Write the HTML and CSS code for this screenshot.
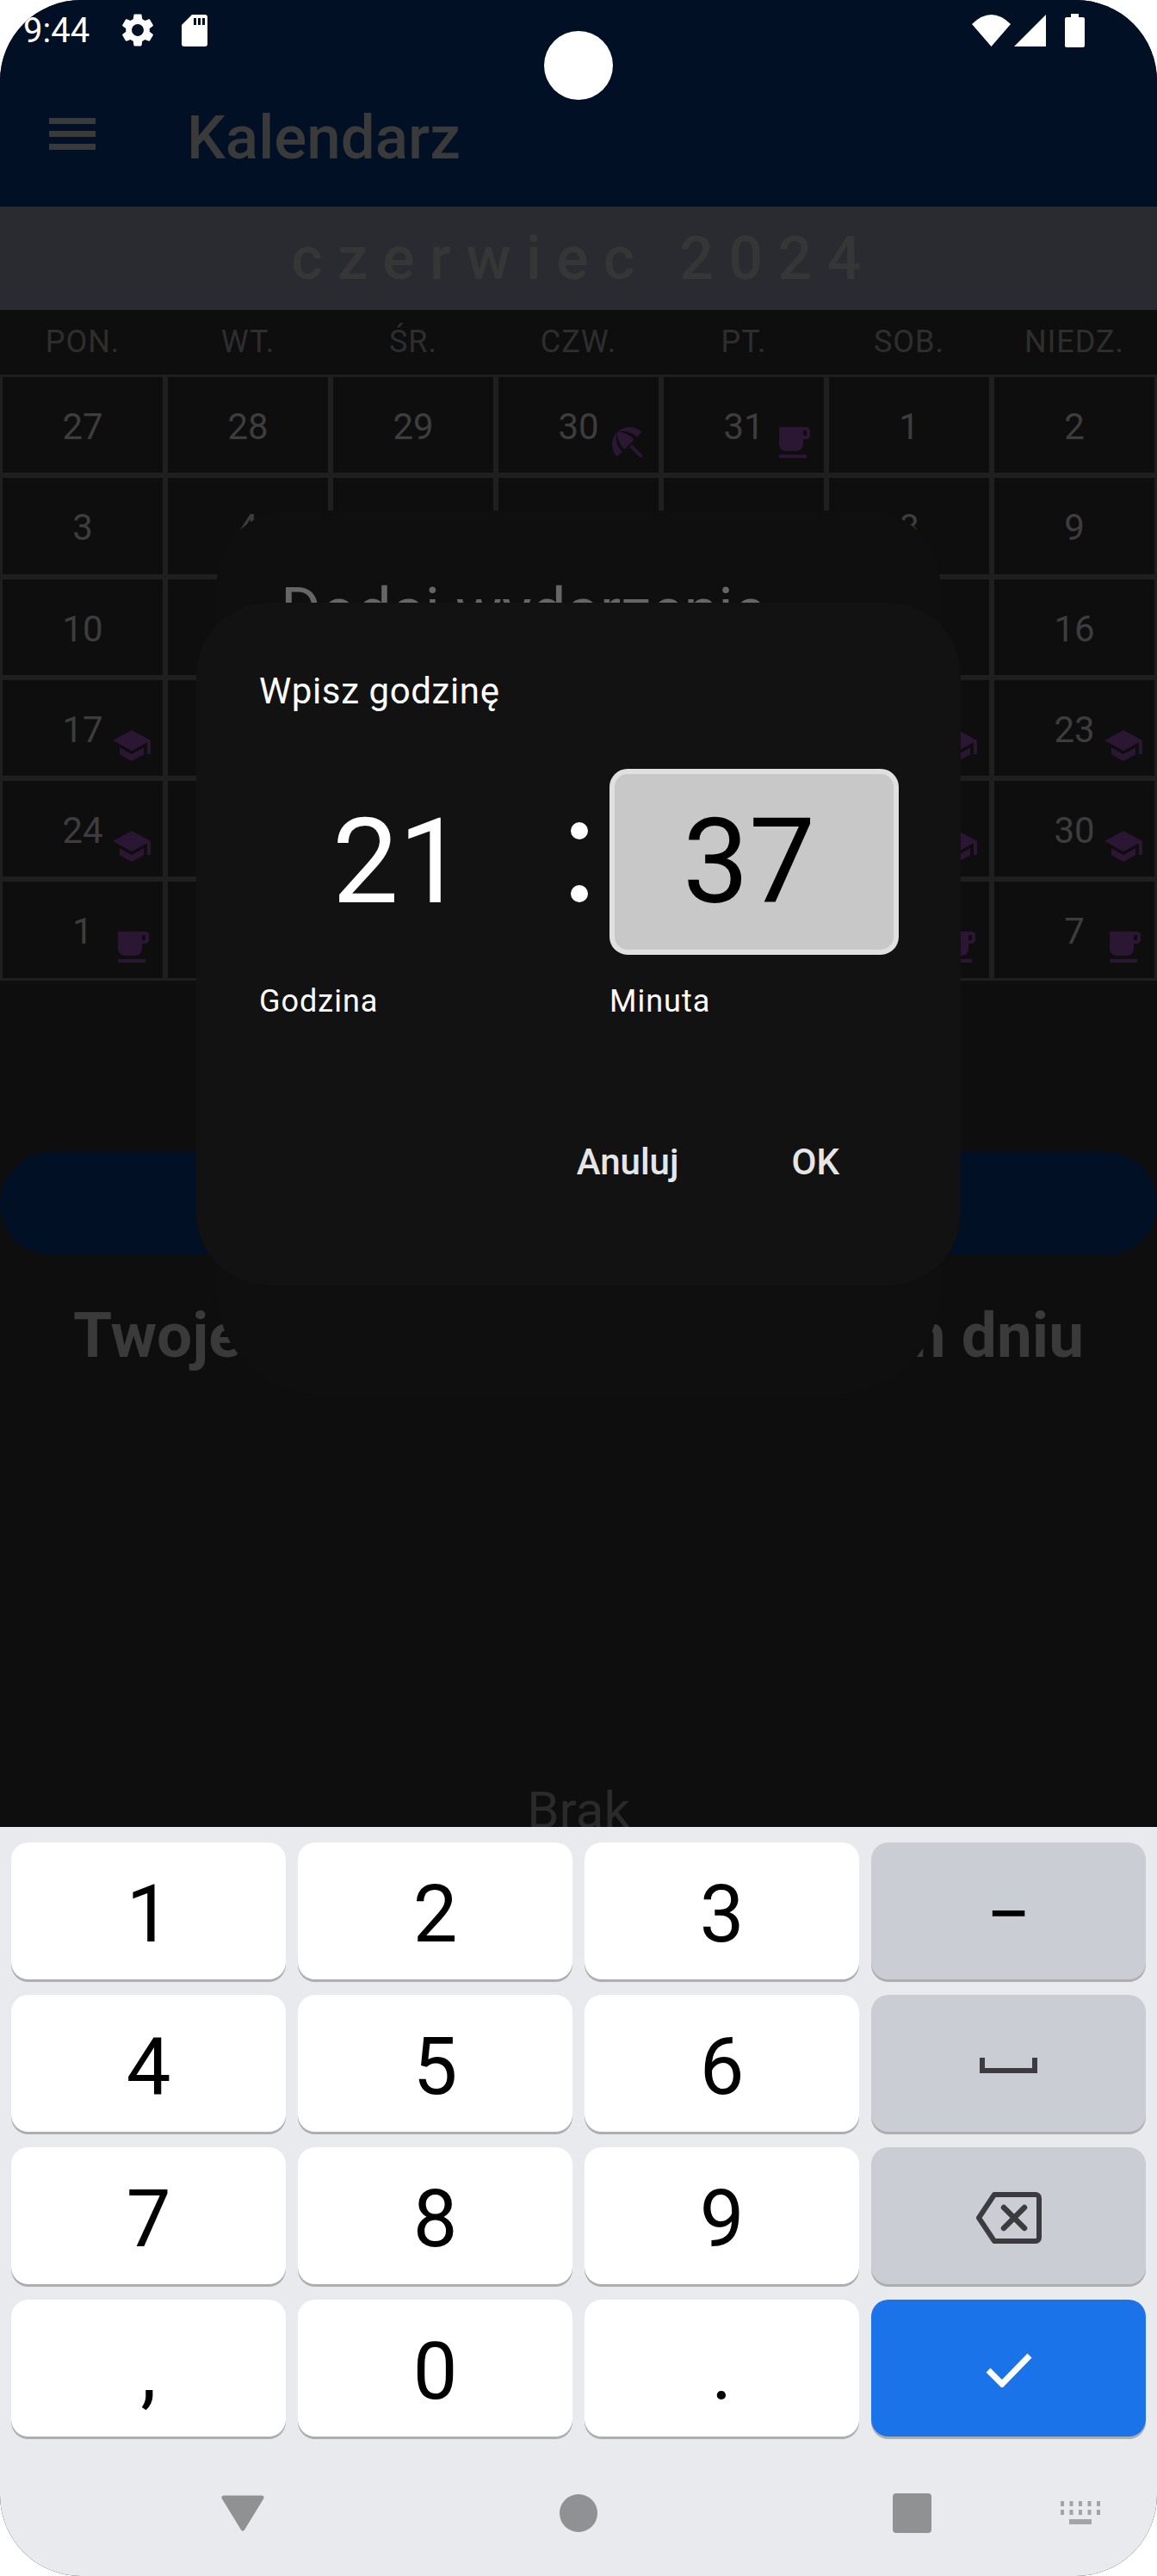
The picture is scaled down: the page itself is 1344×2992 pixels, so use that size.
FILE: index.html
```html
<!DOCTYPE html>
<html lang="pl">
<head>
  <meta charset="UTF-8" />
  <meta name="viewport" content="width=device-width, initial-scale=1.0" />
  <title>Kalendarz</title>
  <link rel="stylesheet" href="styles.css">
</head>
<body>
  <svg class="defs" width="0" height="0">
    <symbol id="school" viewBox="0 0 24 24"><path d="M5 13.18v4L12 21l7-3.82v-4L12 17l-7-3.82zM12 3L1 9l11 6 9-4.91V17h2V9L12 3z"/></symbol>
    <symbol id="coffee" viewBox="0 0 24 24"><path d="M20 3H4v10c0 2.21 1.79 4 4 4h6c2.21 0 4-1.79 4-4v-3h2c1.11 0 2-.89 2-2V5c0-1.11-.89-2-2-2zm0 5h-2V5h2v3zM4 19h16v2H4z"/></symbol>
    <symbol id="beach" viewBox="0 0 24 24"><path d="M13.127 14.56l1.43-1.43 6.44 6.443L19.57 21zm4.293-5.73l2.86-2.86c-3.95-3.95-10.35-3.96-14.3-.02 3.93-1.3 8.31-.25 11.44 2.88zM5.95 5.98c-3.94 3.95-3.93 10.35.02 14.3l2.86-2.86C5.7 14.29 4.65 9.91 5.95 5.98zm.02-.02l-.01.01c-.38 3.01 1.17 6.88 4.3 10.02l5.73-5.73c-3.13-3.13-7.01-4.68-10.02-4.3z"/></symbol>
  </svg>

  <div class="screen">
    <header class="appbar">
      <div class="statusbar">
        <span class="clock">9:44</span>
        <svg class="ic-gear" viewBox="0 0 24 24"><path d="M19.14 12.94c.04-.3.06-.61.06-.94 0-.32-.02-.64-.07-.94l2.03-1.58c.18-.14.23-.41.12-.61l-1.92-3.32c-.12-.22-.37-.29-.59-.22l-2.39.96c-.5-.38-1.03-.7-1.62-.94l-.36-2.54c-.04-.24-.24-.41-.48-.41h-3.84c-.24 0-.43.17-.47.41l-.36 2.54c-.59.24-1.13.57-1.62.94l-2.39-.96c-.22-.08-.47 0-.59.22L2.74 8.87c-.12.21-.08.47.12.61l2.03 1.58c-.05.3-.09.63-.09.94s.02.64.07.94l-2.03 1.58c-.18.14-.23.41-.12.61l1.92 3.32c.12.22.37.29.59.22l2.39-.96c.5.38 1.03.7 1.62.94l.36 2.54c.05.24.24.41.48.41h3.84c.24 0 .44-.17.47-.41l.36-2.54c.59-.24 1.13-.56 1.62-.94l2.39.96c.22.08.47 0 .59-.22l1.92-3.32c.12-.22.07-.47-.12-.61l-2.01-1.58zM12 15.6c-1.98 0-3.6-1.62-3.6-3.6s1.62-3.6 3.6-3.6 3.6 1.62 3.6 3.6-1.62 3.6-3.6 3.6z"/></svg>
        <svg class="ic-sd" viewBox="0 0 30 37"><path fill-rule="evenodd" d="M12 0h15a3 3 0 0 1 3 3v31a3 3 0 0 1-3 3H3a3 3 0 0 1-3-3V12zM14 4v8h3V4zM19 4v8h3V4zM24 4v8h3V4z"/></svg>
        <span class="status-right">
          <svg class="ic-wifi" viewBox="0 0 45 37"><path d="M0 11Q22.500-11 45 11L22.500 37z"/></svg>
          <svg class="ic-signal" viewBox="0 0 37 37"><path d="M37 0v37H0z"/></svg>
          <svg class="ic-battery" viewBox="0 0 23 39"><path d="M7 0h9v4h5a2 2 0 0 1 2 2v31a2 2 0 0 1-2 2H2a2 2 0 0 1-2-2V6a2 2 0 0 1 2-2h5z"/></svg>
        </span>
      </div>
      <div class="toolbar">
        <div class="menu"><i></i><i></i><i></i></div>
        <h1>Kalendarz</h1>
      </div>
    </header>

    <div class="month">czerwiec 2024</div>

    <div class="weekdays">
      <span>PON.</span><span>WT.</span><span>ŚR.</span><span>CZW.</span><span>PT.</span><span>SOB.</span><span>NIEDZ.</span>
    </div>

    <!-- cells under the dialogs have no number, only what shows past the edges -->
    <div class="grid">
      <div class="day">27</div>
      <div class="day">28</div>
      <div class="day">29</div>
      <div class="day">30<svg class="ev"><use href="#beach"/></svg></div>
      <div class="day">31<svg class="ev"><use href="#coffee"/></svg></div>
      <div class="day">1</div>
      <div class="day">2</div>

      <div class="day">3</div>
      <div class="day">4</div>
      <div class="day"></div>
      <div class="day"></div>
      <div class="day"></div>
      <div class="day">8</div>
      <div class="day">9</div>

      <div class="day">10</div>
      <div class="day"></div>
      <div class="day"></div>
      <div class="day"></div>
      <div class="day"></div>
      <div class="day"></div>
      <div class="day">16</div>

      <div class="day">17<svg class="ev"><use href="#school"/></svg></div>
      <div class="day"></div>
      <div class="day"></div>
      <div class="day"></div>
      <div class="day"></div>
      <div class="day"><svg class="ev"><use href="#school"/></svg></div>
      <div class="day">23<svg class="ev"><use href="#school"/></svg></div>

      <div class="day">24<svg class="ev"><use href="#school"/></svg></div>
      <div class="day"></div>
      <div class="day"></div>
      <div class="day"></div>
      <div class="day"></div>
      <div class="day"><svg class="ev"><use href="#school"/></svg></div>
      <div class="day">30<svg class="ev"><use href="#school"/></svg></div>

      <div class="day">1<svg class="ev"><use href="#coffee"/></svg></div>
      <div class="day"></div>
      <div class="day"></div>
      <div class="day"></div>
      <div class="day"></div>
      <div class="day"><svg class="ev"><use href="#coffee"/></svg></div>
      <div class="day">7<svg class="ev"><use href="#coffee"/></svg></div>
    </div>

    <div class="add-pill"></div>
    <h2>Twoje wydarzenia w wybranym dniu</h2>
    <p class="empty">Brak</p>

    <div class="camera"></div>

    <div class="dialog-back">
      <div class="dialog-back-title">Dodaj wydarzenie</div>
    </div>

    <div class="dialog">
      <div class="dialog-title">Wpisz godzinę</div>
      <div class="time-row">
        <div class="time-box">21</div>
        <div class="colon"><i></i><i></i></div>
        <div class="time-box selected">37</div>
      </div>
      <div class="label-row">
        <span>Godzina</span>
        <span>Minuta</span>
      </div>
      <div class="actions">
        <span>Anuluj</span>
        <span>OK</span>
      </div>
    </div>

    <div class="keyboard">
      <div class="keys">
        <div class="key">1</div>
        <div class="key">2</div>
        <div class="key">3</div>
        <div class="key fn dash">−</div>
        <div class="key">4</div>
        <div class="key">5</div>
        <div class="key">6</div>
        <div class="key fn">
          <svg class="ic-space" viewBox="0 0 67 18"><path d="M3 0v15h61V0" fill="none" stroke="#3c3c40" stroke-width="6"/></svg>
        </div>
        <div class="key">7</div>
        <div class="key">8</div>
        <div class="key">9</div>
        <div class="key fn">
          <svg class="ic-back" viewBox="0 0 76 60"><path d="M21 3h48a4 4 0 0 1 4 4v46a4 4 0 0 1-4 4H21L3 30z" fill="none" stroke="#3c3c40" stroke-width="6" stroke-linejoin="round"/><path d="M32 18l24 24M56 18L32 42" fill="none" stroke="#3c3c40" stroke-width="6.500" stroke-linecap="round"/></svg>
        </div>
        <div class="key">,</div>
        <div class="key">0</div>
        <div class="key">.</div>
        <div class="key done">
          <svg class="ic-check" viewBox="0 0 54 42"><path d="M3 22l16 16L51 5" fill="none" stroke="#fff" stroke-width="7"/></svg>
        </div>
      </div>
      <div class="navbar">
        <svg class="nav-back" viewBox="0 0 50 42"><path d="M3 3h44L25 39z" fill="#8f9193" stroke="#8f9193" stroke-width="5" stroke-linejoin="round"/></svg>
        <div class="nav-home"></div>
        <div class="nav-recent"></div>
        <svg class="nav-kbd" viewBox="0 0 46 28" fill="#a2a4a7">
          <rect x="0" y="0" width="4" height="6"/><rect x="10.500" y="0" width="4" height="6"/><rect x="21" y="0" width="4" height="6"/><rect x="31.500" y="0" width="4" height="6"/><rect x="42" y="0" width="4" height="6"/>
          <rect x="0" y="10" width="4" height="6"/><rect x="10.500" y="10" width="4" height="6"/><rect x="21" y="10" width="4" height="6"/><rect x="31.500" y="10" width="4" height="6"/><rect x="42" y="10" width="4" height="6"/>
          <rect x="10" y="21" width="26" height="6"/>
        </svg>
      </div>
    </div>
  </div>
</body>
</html>
```

FILE: styles.css
```css
* {
  box-sizing: border-box;
}
html, body {
  margin: 0;
  background: #fff;
}
body {
  font-family: Roboto, "Liberation Sans", sans-serif;
}
.defs {
  position: absolute;
}
.screen {
  position: relative;
  width: 1344px;
  height: 2992px;
  overflow: hidden;
  border-radius: 94px;
  background: #0e0e0e;
}

/* top bar */
.appbar {
  height: 240px;
  background: #011025;
}
.statusbar {
  display: flex;
  align-items: center;
  height: 70px;
  padding: 0 84px 0 27px;
  fill: #fff;
  color: #fff;
}
.clock {
  font-size: 40px;
  width: 110px;
}
.ic-gear {
  width: 46px;
  height: 46px;
}
.ic-sd {
  width: 30px;
  height: 37px;
  margin-left: 28px;
}
.status-right {
  margin-left: auto;
  display: flex;
  align-items: center;
}
.ic-wifi {
  width: 45px;
  height: 37px;
}
.ic-signal {
  width: 37px;
  height: 37px;
  margin-left: 4px;
}
.ic-battery {
  width: 23px;
  height: 39px;
  margin-left: 22px;
}
.toolbar {
  display: flex;
  align-items: center;
  height: 170px;
  padding-left: 57px;
  color: #3a3a3a;
}
.menu {
  display: flex;
  flex-direction: column;
  gap: 8px;
  width: 54px;
}
.menu i {
  display: block;
  height: 7px;
  background: #3a3a3a;
}
.toolbar h1 {
  margin: 10px 0 0 106px;
  font-size: 71px;
  font-weight: 500;
  line-height: 90px;
}

.month {
  height: 120px;
  padding-left: 12px;
  line-height: 120px;
  background: #2a2b30;
  color: #363636;
  text-align: center;
  font-size: 70px;
  font-weight: 500;
  letter-spacing: 17.3px;
}
.weekdays {
  display: grid;
  grid-template-columns: repeat(7, 192px);
  height: 75px;
  line-height: 74px;
  text-align: center;
  font-size: 36px;
  letter-spacing: 1px;
  color: #2e2e2e;
}
.grid {
  display: grid;
  grid-template-columns: repeat(7, 192px);
  grid-auto-rows: 117.3px;
}
.day {
  position: relative;
  border: 3px solid #1f1f1f;
  padding-top: 33px;
  text-align: center;
  font-size: 42px;
  line-height: 50px;
  color: #3d3d3d;
}
.ev {
  position: absolute;
  right: 12px;
  top: 52px;
  width: 48px;
  height: 48px;
  fill: #2b1733;
}

.add-pill {
  height: 120px;
  margin-top: 199px;
  border-radius: 60px;
  background: #011025;
}
h2 {
  margin: 48px 0 0;
  font-size: 73px;
  font-weight: 700;
  line-height: 90px;
  text-align: center;
  white-space: nowrap;
  color: #3a3a3a;
}
.empty {
  margin: 0;
  position: absolute;
  top: 2068px;
  left: 0;
  width: 100%;
  text-align: center;
  font-size: 60px;
  line-height: 70px;
  color: #2a2a2a;
}
.camera {
  position: absolute;
  left: 632px;
  top: 36px;
  width: 80px;
  height: 80px;
  border-radius: 50%;
  background: #fff;
}

/* dialogs */
.dialog-back {
  position: absolute;
  left: 252px;
  top: 593px;
  width: 840px;
  height: 1027px;
  padding: 72px 74px;
  border-radius: 84px 84px 120px 120px;
  background: #0f0f0f;
}
.dialog-back-title {
  font-size: 72px;
  line-height: 90px;
  color: #666;
}
.dialog {
  position: absolute;
  left: 228px;
  top: 700px;
  width: 888px;
  height: 793px;
  padding: 76px 73px 0;
  border-radius: 84px;
  background: #121212;
  color: #fff;
}
.dialog-title {
  font-size: 42px;
  letter-spacing: 0.6px;
  line-height: 54px;
}
.time-row {
  display: grid;
  grid-template-columns: 336px 71px 336px;
  margin-top: 63px;
  height: 216px;
}
.time-box {
  display: flex;
  align-items: center;
  justify-content: center;
  padding-right: 12px;
  font-size: 137px;
  border-radius: 21px;
}
.time-box.selected {
  background: #c8c8c8;
  border: 6px solid #e0e0e0;
  color: #000;
}
.colon {
  display: flex;
  flex-direction: column;
  align-items: center;
  gap: 53px;
  padding-top: 62px;
}
.colon i {
  display: block;
  width: 20px;
  height: 20px;
  border-radius: 50%;
  background: #fff;
}
.label-row {
  display: grid;
  grid-template-columns: 407px 336px;
  margin-top: 30px;
  font-size: 36px;
  letter-spacing: 1px;
  line-height: 48px;
}
.actions {
  display: flex;
  justify-content: flex-end;
  gap: 131px;
  margin-top: 136px;
  padding-right: 68px;
  font-size: 42px;
  font-weight: 500;
  line-height: 54px;
  color: #e6e6e6;
}

/* keyboard */
.keyboard {
  position: absolute;
  left: 0;
  top: 2122px;
  width: 100%;
  height: 870px;
  padding: 18px 13px 0;
  background: #e8eaed;
}
.keys {
  display: grid;
  grid-template-columns: repeat(4, 319px);
  grid-auto-rows: 159px;
  gap: 18px 14px;
}
.key {
  display: flex;
  align-items: center;
  justify-content: center;
  padding-top: 8px;
  border-radius: 20px;
  background: #fff;
  box-shadow: 0 3px 0 #aeaeb0;
  font-size: 92px;
  color: #000;
}
.key.fn {
  padding-top: 4px;
  background: #cbcdd5;
}
.key.dash {
  padding-top: 8px;
}
.key.done {
  padding-top: 2px;
  background: #1a73e8;
}
.ic-space {
  width: 67px;
  height: 18px;
}
.ic-back {
  width: 76px;
  height: 60px;
}
.ic-check {
  width: 54px;
  height: 42px;
}
.navbar {
  display: flex;
  align-items: center;
  height: 46px;
  margin-top: 66px;
}
.nav-back {
  width: 50px;
  height: 42px;
  margin-left: 244px;
}
.nav-home {
  width: 44px;
  height: 44px;
  margin-left: 343px;
  border-radius: 50%;
  background: #8f9193;
}
.nav-recent {
  width: 45px;
  height: 46px;
  margin-left: 343px;
  border-radius: 4px;
  background: #8f9193;
}
.nav-kbd {
  width: 46px;
  height: 28px;
  margin-left: 150px;
}
```
